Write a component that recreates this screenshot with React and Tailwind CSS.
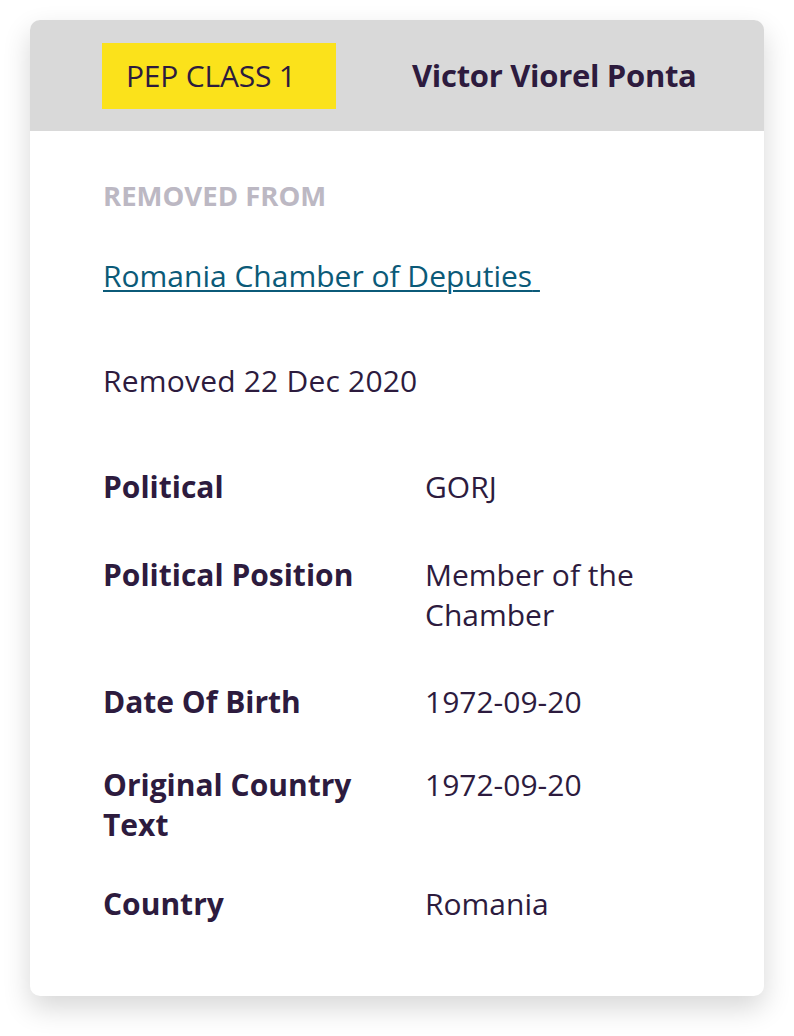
export default function App() {
  const rows = [
    { label: "Political", value: "GORJ", mt: "mt-[66px]" },
    { label: "Political Position", value: "Member of the Chamber", mt: "mt-[48px]" },
    { label: "Date Of Birth", value: "1972-09-20", mt: "mt-[47px]" },
    { label: "Original Country Text", value: "1972-09-20", mt: "mt-[43px]" },
    { label: "Country", value: "Romania", mt: "mt-[39px]" },
  ];
  return (
    <div
      className="min-h-[1036px] w-[794px] bg-white pt-[20px] pl-[30px] text-[#2d1b3e]"
      style={{ fontFamily: '"Open Sans", "Noto Sans", sans-serif' }}
    >
      <div className="w-[734px] h-[976px] overflow-hidden rounded-[10px] bg-white shadow-[0_12px_28px_rgba(0,0,0,0.16)]">
        <div className="flex h-[111px] items-center bg-[#d9d9d9] pl-[72px]">
          <div className="flex h-[66px] w-[234px] items-center bg-[#fbe21b] pl-[24px] text-[30px] font-normal tracking-[-0.2px]">
            PEP CLASS 1
          </div>
          <div className="ml-[76px] text-[31px] font-bold tracking-[-0.3px]">Victor Viorel Ponta</div>
        </div>
        <div className="pl-[73px] pr-[73px]">
          <div className="mt-[47px] text-[27.5px] font-bold leading-[36px] text-[#bcb8c3]">
            REMOVED FROM
          </div>
          <div className="mt-[42px] text-[30px] leading-[40px]">
            <a href="#" className="text-[#0b5a78] underline decoration-2 underline-offset-[3px]">
              Romania Chamber of Deputies{"\u00a0"}
            </a>
          </div>
          <div className="mt-[65px] text-[30px] leading-[40px] tracking-[0.2px]">Removed 22 Dec 2020</div>
          <div>
            {rows.map((r) => (
              <div key={r.label} className={`grid grid-cols-[322px_1fr] ${r.mt} text-[30px] leading-[40px]`}>
                <div className="pr-[20px] font-bold">{r.label}</div>
                <div>{r.value}</div>
              </div>
            ))}
          </div>
        </div>
      </div>
    </div>
  );
}
